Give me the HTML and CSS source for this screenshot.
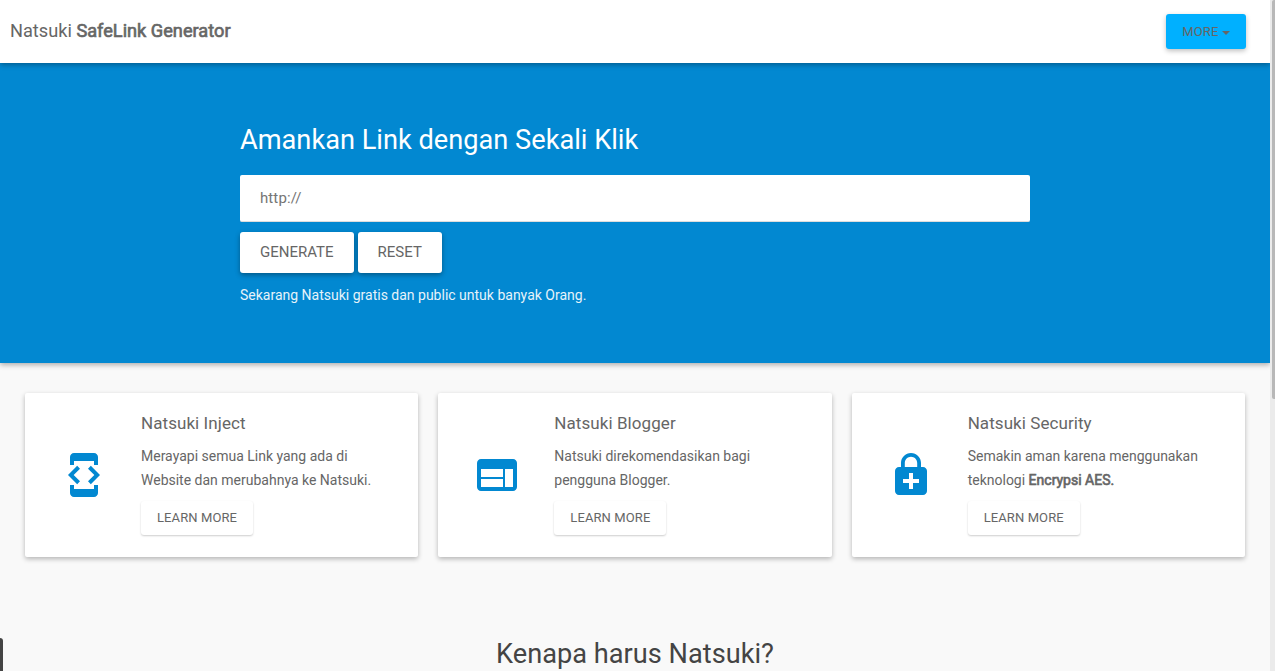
FILE: index.html
```html
<!DOCTYPE html>
<html lang="id">
<head>
<meta charset="utf-8">
<title>Natsuki SafeLink Generator</title>
<link rel="stylesheet" href="styles.css">
</head>
<body>
<div class="page">
  <header class="navbar">
    <div class="brand">Natsuki <span class="strong">SafeLink Generator</span></div>
    <button class="btn btn-more">MORE <span class="caret"></span></button>
  </header>
  <section class="hero">
    <div class="hero-inner">
      <h1 class="hero-title">Amankan Link dengan Sekali Klik</h1>
      <input class="url" type="text" placeholder="http://">
      <div class="actions">
        <button class="btn btn-large">GENERATE</button>
        <button class="btn btn-large">RESET</button>
      </div>
      <p class="hero-note">Sekarang Natsuki gratis dan public untuk banyak Orang.</p>
    </div>
  </section>
  <main class="cards">
    <article class="card">
      <svg class="icon" viewBox="0 0 24 24"><path d="M7 5h10v2h2V3c0-1.100-.9-1.990-2-1.990L7 1c-1.100 0-2 .9-2 2v4h2V5zm8.410 11.590L20 12l-4.590-4.590L14 8.830 17.170 12 14 15.170l1.410 1.420zM10 15.170L6.830 12 10 8.830 8.590 7.410 4 12l4.590 4.590L10 15.170zM17 19H7v-2H5v4c0 1.100.9 2 2 2h10c1.100 0 2-.9 2-2v-4h-2v2z"/></svg>
      <div class="card-body">
        <h2 class="card-title">Natsuki Inject</h2>
        <p class="card-text">Merayapi semua Link yang ada di<br>Website dan merubahnya ke Natsuki.</p>
        <button class="btn btn-learn">LEARN MORE</button>
      </div>
    </article>
    <article class="card">
      <svg class="icon" viewBox="0 0 24 24"><path d="M20 4H4c-1.100 0-1.990.9-1.990 2L2 18c0 1.100.9 2 2 2h16c1.100 0 2-.9 2-2V6c0-1.100-.9-2-2-2zm-5 14H4v-4h11v4zm0-5H4V9h11v4zm5 5h-4V9h4v9z"/></svg>
      <div class="card-body">
        <h2 class="card-title">Natsuki Blogger</h2>
        <p class="card-text">Natsuki direkomendasikan bagi<br>pengguna Blogger.</p>
        <button class="btn btn-learn">LEARN MORE</button>
      </div>
    </article>
    <article class="card">
      <svg class="icon" viewBox="0 0 24 24"><path d="M18 8h-1V6c0-2.760-2.240-5-5-5S7 3.240 7 6v2H6c-1.100 0-2 .9-2 2v10c0 1.100.9 2 2 2h12c1.100 0 2-.9 2-2V10c0-1.100-.9-2-2-2zM8.900 6c0-1.710 1.390-3.100 3.100-3.100s3.100 1.390 3.100 3.100v2H8.900V6zM16 16h-3v3h-2v-3H8v-2h3v-3h2v3h3v2z"/></svg>
      <div class="card-body">
        <h2 class="card-title">Natsuki Security</h2>
        <p class="card-text">Semakin aman karena menggunakan<br>teknologi <span class="strong">Encrypsi AES.</span></p>
        <button class="btn btn-learn">LEARN MORE</button>
      </div>
    </article>
  </main>
  <h2 class="section-title">Kenapa harus Natsuki?</h2>
</div>
<div class="scrollbar"><div class="thumb"></div></div>
<div class="drawer-edge"></div>
</body>
</html>
```
FILE: styles.css
```css
* { box-sizing: border-box; }
body {
  margin: 0;
  height: 671px;
  overflow: hidden;
  display: grid;
  grid-template-columns: 1fr 5px;
  background: #f9f9f9;
  color: #666;
  font-family: Roboto, sans-serif;
  font-size: 14px;
}
h1, h2, p { margin: 0; font-weight: 400; }
.page { height: 671px; overflow: hidden; }
.strong { -webkit-text-stroke: 0.65px currentColor; }

.navbar {
  position: relative;
  height: 63px;
  padding: 0 24px 0 10px;
  display: flex;
  align-items: center;
  justify-content: space-between;
  background: #fff;
  box-shadow: 0 2px 5px rgba(0, 0, 0, .3);
}
.brand { font-size: 18.2px; line-height: 24px; padding-bottom: 2px; }

.btn {
  border: 0;
  border-radius: 3px;
  background: #fff;
  color: #666;
  font-family: inherit;
}
.btn-more {
  width: 80px;
  height: 35px;
  padding: 0;
  font-size: 13px;
  letter-spacing: .1px;
  background: #00b0ff;
  box-shadow: 0 2px 5px rgba(0, 0, 0, .25);
}
.caret {
  display: inline-block;
  vertical-align: middle;
  border: 4px solid transparent;
  border-top-color: currentColor;
  border-bottom: 0;
}

.hero {
  height: 300px;
  padding-top: 60px;
  background: #0288d1;
  box-shadow: 0 2px 5px rgba(0, 0, 0, .3);
}
.hero-inner { width: 790px; margin: 0 auto; }
.hero-title { font-size: 27.2px; line-height: 34px; color: #fff; }
.url {
  display: block;
  width: 100%;
  height: 47px;
  margin-top: 18px;
  padding: 0 20px;
  border: 0;
  border-bottom: 1px solid #ddd;
  border-radius: 2px;
  background: #fff;
  font-family: inherit;
  font-size: 15px;
  letter-spacing: .1px;
}
.url::placeholder { color: #757575; }
.actions { display: flex; gap: 4px; margin-top: 10px; }
.btn-large {
  height: 41px;
  padding: 0 20px 2px;
  font-size: 15px;
  box-shadow: 0 2px 5px rgba(0, 0, 0, .35);
}
.hero-note { margin-top: 10px; line-height: 24px; color: #fff; opacity: .9; }

.cards {
  display: grid;
  grid-template-columns: repeat(3, 1fr);
  gap: 20px;
  padding: 30px 25px 0;
}
.card {
  height: 164px;
  display: grid;
  grid-template-columns: 116px 1fr;
  background: #fff;
  border-radius: 2px;
  box-shadow: 0 2px 5px rgba(0, 0, 0, .28);
}
.icon { width: 48px; height: 48px; margin-left: 35px; align-self: center; fill: #0288d1; }
.card-body { padding-top: 18px; }
.card-title { font-size: 17px; line-height: 24px; letter-spacing: .07px; }
.card-text { margin-top: 9px; line-height: 24px; }
.btn-learn {
  display: block;
  height: 34px;
  margin-top: 9px;
  padding: 0 16px 2px;
  font-size: 13px;
  letter-spacing: .1px;
  box-shadow: 0 1px 2px rgba(0, 0, 0, .2);
}
.section-title {
  margin-top: 80px;
  font-size: 27.2px;
  line-height: 34px;
  text-align: center;
  color: #444;
}

.scrollbar { position: relative; padding-left: 2px; background: #ebebeb; }
.thumb { height: 399px; background: #b8b8b8; border-radius: 2px 0 0 2px; }
.drawer-edge {
  position: absolute;
  left: 0;
  bottom: 0;
  width: 3px;
  height: 33px;
  background: #444;
  border-top-right-radius: 3px;
}
```
